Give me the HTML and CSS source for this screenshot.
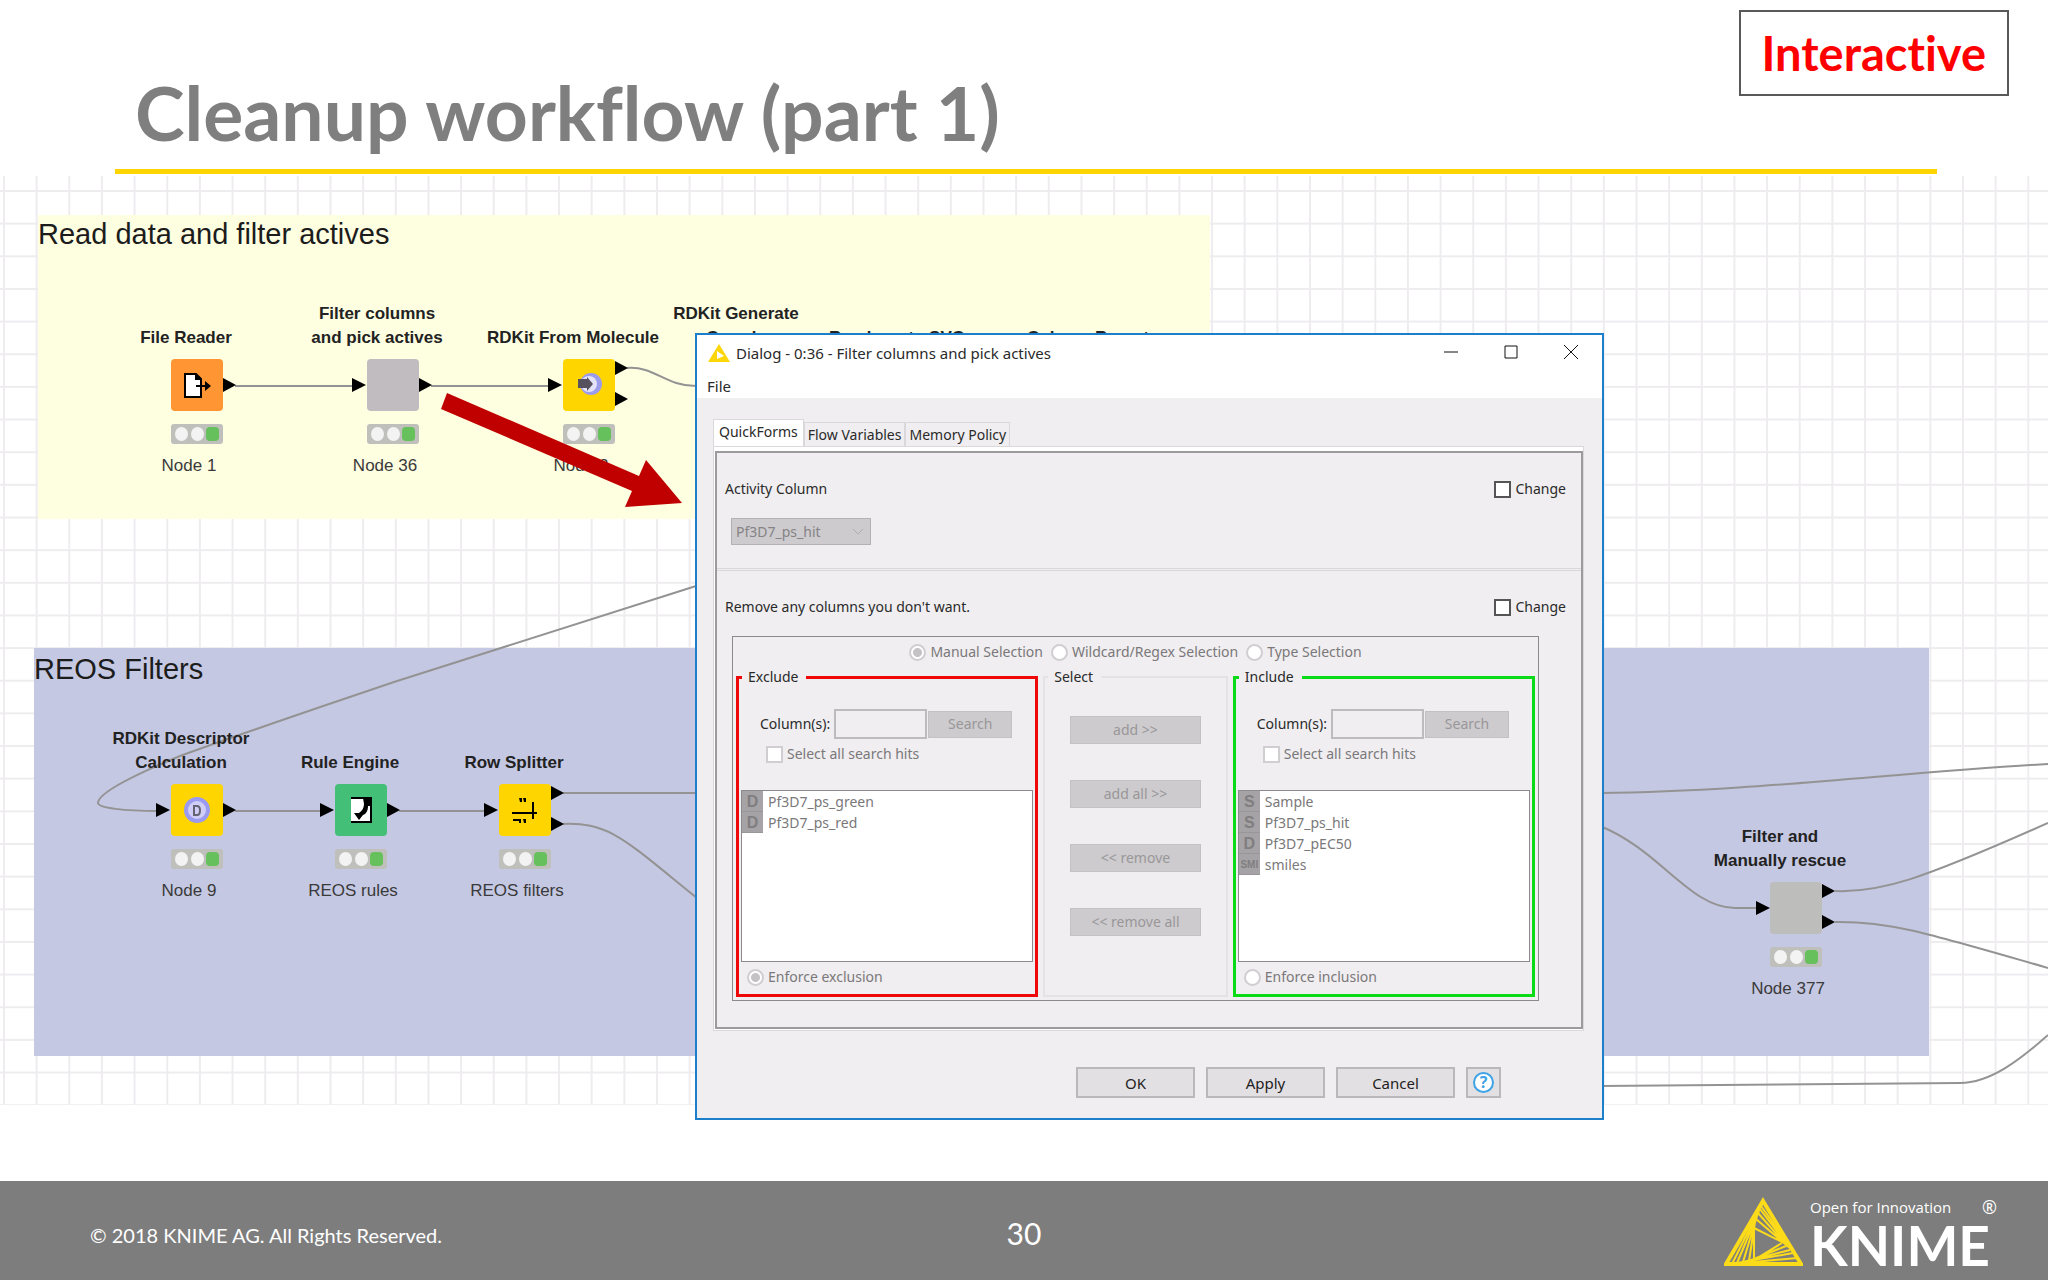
FILE: index.html
```html
<!DOCTYPE html>
<html lang="en">
<head>
<meta charset="UTF-8">
<title>Cleanup workflow (part 1)</title>
<link rel="stylesheet" href="styles.css">
</head>
<body>
<header class="header">
	<h1>Cleanup workflow (part 1)</h1>
	<span class="tag">Interactive</span>
</header>
<main class="stage">
	<div class="canvas">
		<svg class="layer" aria-hidden="true">
			<defs>
				<pattern id="grid" width="25" height="25" patternUnits="userSpaceOnUse" patternTransform="translate(3 14) scale(1.306)">
					<path d="M0 0H25M0 0V25" fill="none" stroke="#eeecef" stroke-width="3"/>
				</pattern>
			</defs>
			<rect width="100%" height="100%" fill="url(#grid)"/>
		</svg>
		<section class="note note-read">Read data and filter actives</section>
		<section class="note note-reos">REOS Filters</section>

		<!-- connections and ports -->
		<svg class="layer" aria-hidden="true">
			<g transform="translate(0 -176)">
				<g class="edges">
					<path d="M235 386H352"/>
					<path d="M431 386H548"/>
					<path d="M627 368C655 366 665 386 696 386"/>
					<path d="M696 586L394 682C300 714 246 732 180 756C110 785 98 797 98 803C98 808 125 811 157 811"/>
					<path d="M235 811H320"/>
					<path d="M399 811H484"/>
					<path d="M563 793H696"/>
					<path d="M563 824C610 822 625 840 697 898"/>
					<path d="M1600 793C1750 792 1900 772 2048 764"/>
					<path d="M1600 826C1660 850 1690 908 1735 908H1756"/>
					<path d="M1835 891C1880 893 1920 880 2048 823"/>
					<path d="M1835 922C1890 921 1930 934 2048 968"/>
					<path d="M1600 1086L1960 1083C1990 1083 2020 1060 2048 1035"/>
				</g>
				<g class="ports">
					<path d="M223 378l13 7l-13 7z"/>
					<path d="M352 378l14 7l-14 7z"/>
					<path d="M419 378l13 7l-13 7z"/>
					<path d="M548 378l14 7l-14 7z"/>
					<path d="M615 361l13 7l-13 7z"/>
					<path d="M615 392l13 7l-13 7z"/>
					<path d="M156 803l14 7l-14 7z"/>
					<path d="M223 803l13 7l-13 7z"/>
					<path d="M320 803l14 7l-14 7z"/>
					<path d="M387 803l13 7l-13 7z"/>
					<path d="M484 803l14 7l-14 7z"/>
					<path d="M551 786l13 7l-13 7z"/>
					<path d="M551 817l13 7l-13 7z"/>
					<path d="M1756 901l14 7l-14 7z"/>
					<path d="M1822 884l13 7l-13 7z"/>
					<path d="M1822 915l13 7l-13 7z"/>
				</g>
			</g>
		</svg>

		<div class="node n1">
			<div class="node-title">File Reader</div>
			<svg class="node-icon orange" viewBox="0 0 52 52">
				<path d="M14 15H25L30 20V38H14Z" fill="#fff" stroke="#000" stroke-width="2"/>
				<path d="M24 14V21H31Z"/>
				<path d="M25 26H34V22L40 27L34 32V28H25Z"/>
			</svg>
			<div class="lights"><i></i><i></i><i></i></div>
			<div class="node-name">Node 1</div>
		</div>
		<div class="node n36">
			<div class="node-title wide">Filter columns<br>and pick actives</div>
			<svg class="node-icon grey" viewBox="0 0 52 52"></svg>
			<div class="lights"><i></i><i></i><i></i></div>
			<div class="node-name">Node 36</div>
		</div>
		<div class="node n2">
			<div class="node-title wide">RDKit From Molecule</div>
			<svg class="node-icon yellow" viewBox="0 0 52 52">
				<circle cx="28" cy="25" r="11" fill="#9c9cec"/>
				<circle cx="26" cy="25" r="8" fill="#e4e2f8"/>
				<path d="M15 20H24V18L30 25L24 32V29H15Z" fill="#55515e"/>
			</svg>
			<div class="lights"><i></i><i></i><i></i></div>
			<div class="node-name">Node 2</div>
		</div>
		<div class="node n3"><div class="node-title">RDKit Generate<br>Coords</div></div>
		<div class="node n4"><div class="node-title">Renderer to SVG</div></div>
		<div class="node n5"><div class="node-title">Column Resorter</div></div>

		<div class="node n9">
			<div class="node-title wide">RDKit Descriptor<br>Calculation</div>
			<svg class="node-icon yellow" viewBox="0 0 52 52">
				<circle cx="26" cy="26" r="11" fill="#d0cef6" stroke="#9a9af0" stroke-width="4"/>
				<path d="M23 22H26C30 22 30 31 26 31H23Z" fill="none" stroke="#666473" stroke-width="2"/>
			</svg>
			<div class="lights"><i></i><i></i><i></i></div>
			<div class="node-name">Node 9</div>
		</div>
		<div class="node n10">
			<div class="node-title">Rule Engine</div>
			<svg class="node-icon green" viewBox="0 0 52 52">
				<path d="M16 15H35V38H16Z" fill="#fff"/>
				<path d="M16 14H36V38H16" fill="none" stroke="#000" stroke-width="2"/>
				<path d="M28 14H37V22H33C33 27 31 30 28 31L24 36L19 29H24C27 27 29 24 29 20Z"/>
			</svg>
			<div class="lights"><i></i><i></i><i></i></div>
			<div class="node-name">REOS rules</div>
		</div>
		<div class="node n11">
			<div class="node-title">Row Splitter</div>
			<svg class="node-icon yellow" viewBox="0 0 52 52">
				<path d="M13 29H38M34 18V35" fill="none" stroke="#000" stroke-width="2"/>
				<path d="M20 14h3v4h-2zM24 14h3v4h-2zM14 35h8v4h-2v-2h-6zM24 35h3v4h-2z"/>
			</svg>
			<div class="lights"><i></i><i></i><i></i></div>
			<div class="node-name">REOS filters</div>
		</div>
		<div class="node n377">
			<div class="node-title wide">Filter and<br>Manually rescue</div>
			<svg class="node-icon stone" viewBox="0 0 52 52"></svg>
			<div class="lights"><i></i><i></i><i></i></div>
			<div class="node-name">Node 377</div>
		</div>

		<svg class="layer" aria-hidden="true">
			<path class="pointer" transform="translate(0 -176)" d="M447 393L639 476L646 460L682 503L625 507L632 491L441 409Z"/>
		</svg>
	</div>

	<div class="dialog" role="dialog" aria-labelledby="dialog-title">
		<div class="titlebar">
			<svg class="app-icon" viewBox="0 0 22 18"><path d="M11 0L22 18H0Z" fill="#fdd60a"/><path d="M9 7L16 12L9 15Z" fill="#fff"/></svg>
			<span id="dialog-title">Dialog - 0:36 - Filter columns and pick actives</span>
			<div class="win-buttons">
				<button type="button" aria-label="Minimize"><svg viewBox="0 0 14 14"><path d="M0 7H14"/></svg></button>
				<button type="button" aria-label="Maximize"><svg viewBox="0 0 14 14"><path d="M1 1H13V13H1Z"/></svg></button>
				<button type="button" aria-label="Close"><svg viewBox="0 0 14 14"><path d="M0 0L14 14M14 0L0 14"/></svg></button>
			</div>
		</div>
		<div class="menubar"><button type="button">File</button></div>
		<form class="body">
			<div class="tabs" role="tablist">
				<button type="button" role="tab" class="active">QuickForms</button>
				<button type="button" role="tab">Flow Variables</button>
				<button type="button" role="tab">Memory Policy</button>
			</div>
			<div class="pane">
				<div class="panel">
					<section class="block">
						<div class="row">
							<label for="activity">Activity Column</label>
							<label class="check change"><input type="checkbox">Change</label>
						</div>
						<select id="activity" disabled>
							<option>Pf3D7_ps_hit</option>
						</select>
					</section>
					<section class="block">
						<div class="row">
							<span>Remove any columns you don't want.</span>
							<label class="check change"><input type="checkbox">Change</label>
						</div>
						<div class="filter">
							<div class="modes">
								<label class="check"><input type="radio" name="mode" checked disabled>Manual Selection</label>
								<label class="check"><input type="radio" name="mode" disabled>Wildcard/Regex Selection</label>
								<label class="check"><input type="radio" name="mode" disabled>Type Selection</label>
							</div>
							<div class="groups">
								<fieldset class="exclude">
									<legend>Exclude</legend>
									<div class="search">
										<label for="ex-col">Column(s):</label>
										<input type="text" id="ex-col" disabled>
										<button type="button" disabled>Search</button>
									</div>
									<label class="check hits"><input type="checkbox" disabled>Select all search hits</label>
									<ul class="list">
										<li><b>D</b>Pf3D7_ps_green</li>
										<li><b>D</b>Pf3D7_ps_red</li>
									</ul>
									<label class="check enforce"><input type="radio" name="enforce" checked disabled>Enforce exclusion</label>
								</fieldset>
								<fieldset class="select">
									<legend>Select</legend>
									<button type="button" disabled>add &gt;&gt;</button>
									<button type="button" disabled>add all &gt;&gt;</button>
									<button type="button" disabled>&lt;&lt; remove</button>
									<button type="button" disabled>&lt;&lt; remove all</button>
								</fieldset>
								<fieldset class="include">
									<legend>Include</legend>
									<div class="search">
										<label for="in-col">Column(s):</label>
										<input type="text" id="in-col" disabled>
										<button type="button" disabled>Search</button>
									</div>
									<label class="check hits"><input type="checkbox" disabled>Select all search hits</label>
									<ul class="list">
										<li><b>S</b>Sample</li>
										<li><b>S</b>Pf3D7_ps_hit</li>
										<li><b>D</b>Pf3D7_pEC50</li>
										<li><b class="small">SMI</b>smiles</li>
									</ul>
									<label class="check enforce"><input type="radio" name="enforce" disabled>Enforce inclusion</label>
								</fieldset>
							</div>
						</div>
					</section>
				</div>
			</div>
			<div class="actions">
				<button type="button">OK</button>
				<button type="button">Apply</button>
				<button type="button">Cancel</button>
				<button type="button" class="help" aria-label="Help"><span>?</span></button>
			</div>
		</form>
	</div>
</main>
<footer class="footer">
	<span class="copy">© 2018 KNIME AG. All Rights Reserved.</span>
	<span class="page">30</span>
	<div class="brand">
		<svg viewBox="0 0 79 69" aria-hidden="true">
			<path d="M39 4L77 67H2Z" stroke-width="4"/>
			<path d="M37 9L8 67M35 14L13 66M33 19L19 65M31 25L25 64M30 31V63"/>
			<path d="M37 9L72 58M36 12L68 54M34 16L64 50M32 22L61 47M30 31L58 45"/>
			<path d="M73 61L8 67M69 56L13 66M66 53L19 65M62 49L25 64M58 46L30 63"/>
		</svg>
		<div class="brand-text">
			<div class="slogan"><span>Open for Innovation</span><span class="reg">®</span></div>
			<div class="logo">KNIME</div>
		</div>
	</div>
</footer>
</body>
</html>
```
FILE: styles.css
```css
* {
	box-sizing: border-box;
}
body {
	margin: 0;
	min-height: 100vh;
	display: flex;
	flex-direction: column;
	background: #fff;
	font-family: "Lato", sans-serif;
	font-variant-ligatures: none;
}
button,
input,
select {
	font: inherit;
	color: inherit;
	margin: 0;
}
h1 {
	margin: 0;
	font-size: 75px;
	line-height: 84px;
	color: #7f7f7f;
}

/* header */
.header {
	height: 176px;
	display: flex;
	justify-content: space-between;
	align-items: flex-start;
	padding: 10px 39px 0 115px;
	background: linear-gradient(#ffd500, #ffd500) 115px 169px / calc(100% - 226px) 5px no-repeat;
}
.header h1 {
	padding: 60px 0 0 20px;
}
.tag {
	padding: 14px 21px;
	border: 2px solid #595959;
	font-size: 47px;
	line-height: 54px;
	font-weight: bold;
	color: #f00;
}

/* workflow canvas */
.stage {
	position: relative;
	flex: 1;
	padding-bottom: 76px;
}
.canvas {
	position: relative;
	height: 929px;
	overflow: hidden;
	font-family: "Liberation Sans", Arial, sans-serif;
}
.layer {
	position: absolute;
	left: 0;
	top: 0;
	width: 100%;
	height: 100%;
}
.edges {
	fill: none;
	stroke: #949394;
	stroke-width: 2;
}
.pointer {
	fill: #c00000;
}
.note {
	position: absolute;
	font-size: 29px;
	line-height: 38px;
	color: #1c1c1c;
}
.note-read {
	left: 38px;
	top: 39px;
	width: 1172px;
	height: 304px;
	background: #fefee1;
}
.note-reos {
	left: 34px;
	top: 472px;
	width: 1895px;
	height: 408px;
	padding-top: 2px;
	background: #c5c8e2;
}
.node {
	position: absolute;
	width: 52px;
	display: flex;
	flex-direction: column;
	align-items: center;
	font-size: 17px;
	line-height: 24px;
	white-space: nowrap;
	text-align: center;
}
.n1, .n36, .n2, .n3, .n4, .n5 {
	top: 126px;
}
.n9, .n10, .n11 {
	top: 551px;
}
.n377 {
	top: 649px;
}
.n1, .n9 { left: 171px; }
.n36 { left: 367px; }
.n2 { left: 563px; }
.n3 { left: 721px; }
.n4 { left: 882px; }
.n5 { left: 1081px; }
.n10 { left: 335px; }
.n11 { left: 499px; }
.n377 { left: 1770px; }
.node-title {
	height: 48px;
	display: flex;
	align-items: flex-end;
	padding-right: 22px;
	font-weight: bold;
	color: #222;
}
.node-title.wide {
	padding-right: 32px;
}
.node-icon {
	width: 52px;
	height: 52px;
	margin-top: 9px;
	border-radius: 4px;
}
.orange { background: #ff9633; }
.yellow { background: #ffd500; }
.green { background: #43bf77; }
.grey { background: #c0bcc0; }
.stone { background: #bdbdbc; }
.lights {
	width: 52px;
	height: 20px;
	margin-top: 13px;
	padding: 3px 4px;
	display: flex;
	justify-content: space-between;
	background: #bfbfbb;
	border-radius: 3px;
}
.lights i {
	width: 13px;
	height: 14px;
	border-radius: 50%;
	background: #f3f3f3;
}
.lights i:last-child {
	background: #66c05c;
	border-radius: 4px;
}
.node-name {
	margin-top: 10px;
	padding-right: 16px;
	color: #3a3a3a;
}

/* dialog window */
.dialog {
	position: absolute;
	left: 695px;
	top: 157px;
	width: 909px;
	border: 2px solid #1b7fcc;
	background: #f0eef0;
	font-family: "Noto Sans", sans-serif;
	font-size: 14px;
	line-height: 20px;
	color: #2a2a2a;
}
.titlebar {
	display: flex;
	align-items: center;
	height: 36px;
	padding-left: 11px;
	gap: 6px;
	background: #fff;
	font-size: 15px;
}
.app-icon {
	width: 22px;
	height: 18px;
}
.win-buttons {
	display: flex;
	margin-left: auto;
	padding-right: 1px;
}
.win-buttons button {
	width: 60px;
	height: 34px;
	padding: 0;
	border: 0;
	background: none;
}
.win-buttons svg {
	width: 14px;
	height: 14px;
	fill: none;
	stroke: #111;
	stroke-width: 1;
}
.menubar {
	height: 27px;
	padding: 5px 10px 0;
	background: #fff;
}
.menubar button {
	padding: 0;
	border: 0;
	background: none;
	font-size: 15px;
}
.body {
	padding: 21px 18px 20px 16px;
}
.tabs {
	display: flex;
	align-items: flex-end;
}
.tabs button {
	height: 24px;
	padding: 0 3px;
	border: 1px solid #dad8da;
	border-bottom: 0;
	background: #f0eef0;
}
.tabs .active {
	height: 27px;
	padding: 0 5px 2px;
	background: #fff;
}
.pane {
	padding: 4px 0 1px 1px;
	border: 1px solid #dad8da;
	background: #fff;
}
.panel {
	border: 2px solid #9c9a9c;
	background: #f0eef0;
}
.block {
	padding: 26px 15px 23px 8px;
}
.block + .block {
	padding-bottom: 26px;
	border-top: 3px double #d9d7d9;
}
.row {
	display: flex;
	justify-content: space-between;
	margin-bottom: 19px;
}
.check {
	display: flex;
	align-items: center;
	gap: 4px;
}
.check input {
	appearance: none;
	width: 17px;
	height: 17px;
	border: 2px solid #555;
	background: #fff;
}
.check input:disabled {
	border-color: #d0ced0;
}
.check input[type="radio"] {
	border-radius: 50%;
}
.check input[type="radio"]:checked {
	background: radial-gradient(#c4c2c4 4px, #fff 5px);
}
#activity {
	display: block;
	appearance: none;
	width: 140px;
	height: 27px;
	margin-left: 6px;
	padding: 0 4px;
	border: 1px solid #b3b1b3;
	border-radius: 0;
	background: #cdcbce url("data:image/svg+xml,%3Csvg xmlns='http://www.w3.org/2000/svg' width='12' height='8'%3E%3Cpath d='M1 1L6 6L11 1' fill='none' stroke='%23aeacae' stroke-width='1'/%3E%3C/svg%3E") right 6px center no-repeat;
	color: #858385;
	opacity: 1;
}
.filter {
	margin: 0 27px 0 7px;
	padding: 5px 3px 3px;
	border: 1px solid #8c8a8c;
	color: #7a787a;
}
.modes {
	display: flex;
	justify-content: center;
	gap: 8px;
	margin-bottom: 5px;
}
.groups {
	display: grid;
	grid-template-columns: 303fr 185fr 303fr;
	gap: 5px;
}
fieldset {
	min-width: 0;
	margin: 0;
	padding: 0 2px 7px;
	border: 3px solid #d00;
}
.exclude {
	border-color: #ee0808;
}
.include {
	border-color: #0bdb16;
}
.select {
	border: 2px solid #e4e2e4;
}
legend {
	margin-left: 1px;
	padding: 0 8px 0 6px;
	color: #2a2a2a;
}
.search {
	display: flex;
	align-items: center;
	margin: 22px 21px 5px 19px;
}
.search label {
	margin-right: 4px;
	color: #2a2a2a;
}
.search input {
	flex: 1;
	min-width: 0;
	height: 30px;
	border: 2px solid #bdbbbd;
	background: #f0eef0;
}
.search button,
.select button {
	width: 84px;
	height: 27px;
	margin-left: 1px;
	padding: 0;
	border: 1px solid #c3c1c3;
	background: #cdcbce;
	color: #999799;
}
.hits {
	padding-left: 25px;
}
.list {
	height: 172px;
	margin: 26px 0 5px;
	padding: 0;
	border: 1px solid #8c8a8c;
	background: #fff;
	list-style: none;
}
.list li {
	display: flex;
	gap: 5px;
	line-height: 21px;
}
.list b {
	width: 21px;
	height: 21px;
	border-bottom: 1px solid #989698;
	background: #a5a3a5;
	color: #807e80;
	font-family: "Liberation Sans", Arial, sans-serif;
	font-size: 16px;
	text-align: center;
}
.list .small {
	font-size: 10px;
}
.enforce {
	padding-left: 6px;
}
.select button {
	display: block;
	width: 131px;
	height: 28px;
	margin: 0 auto 36px;
}
.select legend + button {
	margin-top: 29px;
}
.select button:last-child {
	margin-bottom: 0;
}
.actions {
	display: flex;
	justify-content: flex-end;
	gap: 11px;
	margin: 36px 83px 0 0;
}
.actions button {
	width: 119px;
	height: 31px;
	padding: 0;
	border: 2px solid #bab8ba;
	background: #e2e0e2;
	font-size: 15px;
	color: #222;
}
.actions .help {
	width: 35px;
	display: flex;
	align-items: center;
	justify-content: center;
}
.help span {
	width: 21px;
	height: 21px;
	border: 2px solid #3fa3e6;
	border-radius: 50%;
	background: #fff;
	font-size: 16px;
	line-height: 17px;
	font-weight: bold;
	color: #3fa3e6;
}

/* footer */
.footer {
	height: 99px;
	display: grid;
	grid-template-columns: 1fr auto 1fr;
	align-items: center;
	background: #7d7d7d;
	color: #fff;
}
.copy {
	padding: 8px 0 0 90px;
	font-size: 20px;
	line-height: 26px;
}
.page {
	padding-top: 5px;
	font-size: 30px;
	line-height: 36px;
}
.brand {
	display: flex;
	justify-content: flex-end;
	align-items: flex-end;
	gap: 7px;
	padding: 0 51px 0 0;
}
.brand svg {
	width: 79px;
	height: 69px;
	margin-bottom: 7px;
	fill: none;
	stroke: #fcdb1a;
	stroke-width: 2;
}
.slogan {
	display: flex;
	justify-content: space-between;
	padding-top: 8px;
	font-family: "Open Sans", sans-serif;
	font-size: 15px;
	line-height: 20px;
}
.reg {
	font-size: 18px;
}
.logo {
	padding-right: 7px;
	font-size: 55px;
	line-height: 56px;
	font-weight: bold;
}
```
